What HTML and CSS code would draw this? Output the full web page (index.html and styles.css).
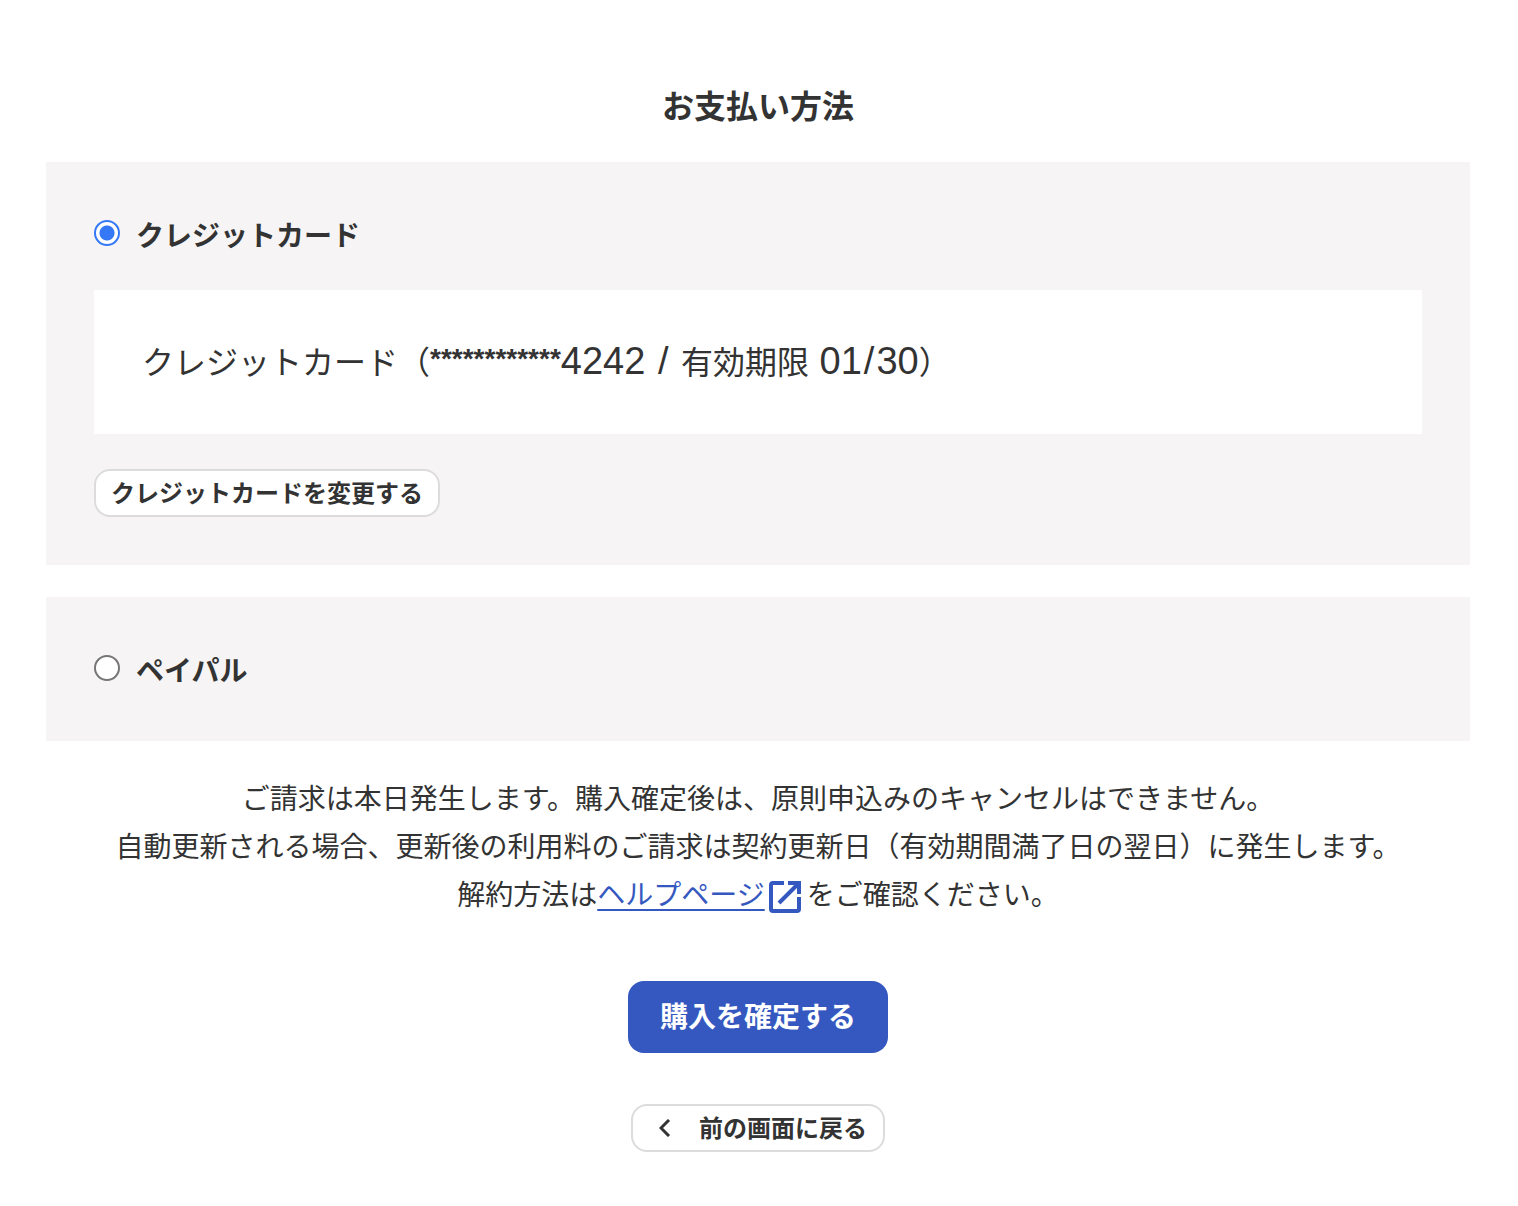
FILE: index.html
```html
<!DOCTYPE html>
<html lang="ja">
<head>
    <meta charset="UTF-8">
    <meta name="viewport" content="width=device-width, initial-scale=1.0">
    <title>お支払い方法</title>
    <link rel="stylesheet" href="styles.css">
</head>
<body>
    <main class="payment">
        <h1>お支払い方法</h1>
        <form class="payment-form">
            <!-- Credit card -->
            <section class="method">
                <div class="method-head">
                    <input type="radio" id="method-card" name="method" value="card" checked>
                    <label for="method-card">クレジットカード</label>
                </div>
                <p class="card-info">クレジットカード（<span class="mask">************</span><span class="digits">4242 <span class="slash">/</span> </span>有効期限<span class="digits"> 01<span class="slash">/</span>30</span>）</p>
                <button type="button" class="btn btn-outline">クレジットカードを変更する</button>
            </section>

            <!-- PayPal -->
            <section class="method">
                <div class="method-head">
                    <input type="radio" id="method-paypal" name="method" value="paypal">
                    <label for="method-paypal">ペイパル</label>
                </div>
            </section>

            <p class="notice">
                ご請求は本日発生します。購入確定後は、原則申込みのキャンセルはできません。<br>
                自動更新される場合、更新後の利用料のご請求は契約更新日（有効期間満了日の翌日）に発生します。<br>
                解約方法は<a href="#">ヘルプページ</a><svg class="icon-external" viewBox="0 0 32 32" aria-hidden="true"><path d="M15 2H4Q2 2 2 4V28Q2 30 4 30H28Q30 30 30 28V16M19 2H30V13M29 3L10 22"/></svg>をご確認ください。
            </p>

            <div class="actions">
                <button type="submit" class="btn btn-primary">購入を確定する</button>
                <button type="button" class="btn btn-outline btn-back">
                    <svg class="icon-back" viewBox="0 0 12 18" aria-hidden="true"><path d="M10 1L2 9L10 17"/></svg>
                    前の画面に戻る
                </button>
            </div>
        </form>
    </main>
</body>
</html>
```

FILE: styles.css
```css
* {
    box-sizing: border-box;
}

body {
    margin: 0;
    background-color: #fff;
    color: #333;
    font-family: "Noto Sans CJK JP", sans-serif;
    font-size: 28px;
    line-height: 48px;
}

.payment {
    padding: 80px 48px 54px 46px;
}

h1 {
    margin: 0 0 34px;
    font-size: 32px;
    line-height: 48px;
    text-align: center;
}

.method {
    margin-bottom: 32px;
    padding: 48px;
    background-color: #f6f4f5;
}

.method-head {
    display: flex;
    align-items: center;
    gap: 16px;
    font-weight: bold;
}

.method-head input {
    appearance: none;
    width: 26px;
    height: 26px;
    margin: 0 0 2px;
    border: 2px solid #767676;
    border-radius: 50%;
    background-color: #fff;
}

.method-head input:checked {
    border-color: #3478f6;
    background-image: radial-gradient(circle, #3478f6 7px, #fff 8px);
}

.card-info {
    margin: 32px 0 35px;
    padding: 46px 48px 50px;
    background-color: #fff;
    font-size: 32px;
}

.digits {
    font-family: "Liberation Sans", sans-serif;
    font-size: 38px;
    line-height: 1;
}

.slash {
    margin: 0 2px;
}

.mask {
    font-family: "Liberation Sans", sans-serif;
    font-size: 28px;
    font-weight: bold;
    line-height: 1;
    vertical-align: 6px;
}

.btn {
    border-radius: 16px;
    font-family: inherit;
    font-weight: bold;
    cursor: pointer;
}

.btn-outline {
    display: flex;
    align-items: center;
    height: 48px;
    padding: 0 15px 4px;
    border: 2px solid #dcdcdc;
    background-color: #fff;
    color: #333;
    font-size: 24px;
}

.btn-primary {
    height: 72px;
    padding: 0 32px 4px;
    border: none;
    background-color: #3558c0;
    color: #fff;
    font-size: 28px;
}

.btn-back {
    gap: 28px;
    padding: 0 16px 4px 26px;
}

.notice {
    margin: 0 0 64px;
    text-align: center;
}

.notice a {
    color: #3558c0;
    text-decoration: underline;
    text-decoration-thickness: 2px;
    text-underline-offset: 4px;
}

.icon-external,
.icon-back {
    fill: none;
    stroke: currentColor;
    stroke-width: 3;
}

.icon-external {
    width: 32px;
    height: 32px;
    margin: 0 6px 0 4px;
    color: #3558c0;
    stroke-width: 4;
    vertical-align: -8px;
}

.icon-back {
    width: 12px;
    height: 18px;
    margin-top: 4px;
}

.actions {
    display: flex;
    flex-direction: column;
    align-items: center;
    gap: 51px;
}
```
